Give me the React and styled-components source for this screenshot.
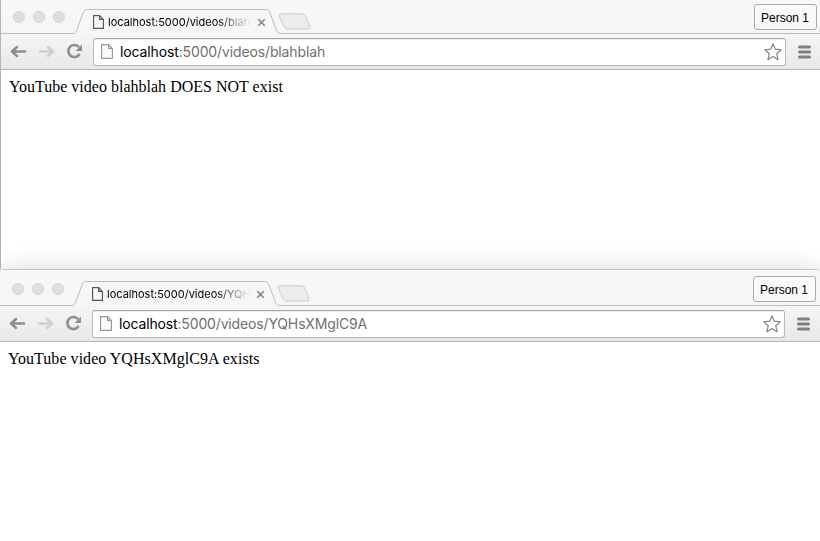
import React from "react";
import styled, { createGlobalStyle } from "styled-components";

const GlobalStyle = createGlobalStyle`
  * { box-sizing: border-box; }
  body { margin: 0; background: #fff; overflow: hidden; }
`;

const Desktop = styled.div`
  display: flex;
  flex-direction: column;
  width: 820px;
  height: 541px;
  overflow: hidden;
  background: #fff;
`;

const BrowserWindow = styled.section`
  display: flex;
  flex-direction: column;
  width: 820px;
  height: ${(p) => (p.$front ? 272 : 269)}px;
  flex: none;
  background: #fff;
  border-left: ${(p) => (p.$front ? "none" : "1px solid #b5b5b5")};
  border-top: ${(p) => (p.$front ? "1px solid #c3c3c3" : "none")};
  border-radius: ${(p) => (p.$front ? "4px 4px 0 0" : "0")};
  box-shadow: ${(p) => (p.$front ? "0 2px 26px rgba(0, 0, 0, 0.18)" : "none")};
  z-index: ${(p) => (p.$front ? 1 : 0)};
  overflow: hidden;
`;

const TabStrip = styled.header`
  display: flex;
  align-items: flex-end;
  flex: none;
  height: ${(p) => (p.$front ? 36 : 34)}px;
  padding-left: 12px;
  background: linear-gradient(#f8f8f8, #f5f5f5);
  box-shadow: inset 0 -1px #bdbdbd;
`;

const Lights = styled.div`
  display: flex;
  gap: 8px;
  width: 62px;
  height: 23px;
`;

const Light = styled.span`
  width: 12px;
  height: 12px;
  border-radius: 50%;
  background: #dfdfdf;
  border: 1px solid #d4d4d4;
`;

const Tab = styled.div`
  position: relative;
  display: flex;
  align-items: center;
  width: 207px;
  height: 25px;
  padding: 1px 0 0 17.5px;
`;

const TabShape = styled.svg`
  position: absolute;
  left: -2px;
  top: 0;
`;

const TabPage = styled.svg`
  position: relative;
  flex: none;
`;

const TabTitle = styled.span`
  position: relative;
  width: 145px;
  margin-left: 4.5px;
  overflow: hidden;
  white-space: nowrap;
  font: 11px/16px Inter, sans-serif;
  letter-spacing: 0;
  color: #000;
  -webkit-mask-image: linear-gradient(90deg, #000 108px, transparent 143px);
  mask-image: linear-gradient(90deg, #000 108px, transparent 143px);
`;

const CloseIcon = styled.svg`
  position: relative;
  flex: none;
  margin-left: 3.5px;
`;

const NewTab = styled.svg`
  flex: none;
  margin: 0 0 3px -4px;
`;

const ProfileButton = styled.button`
  width: 63px;
  height: 26px;
  margin: 0 ${(p) => (p.$front ? 4 : 3)}px 4px auto;
  padding: 2px 1px 0 0;
  border: 1px solid #aaa;
  border-radius: 3px;
  background: #f9f9f9;
  color: #000;
  font: 12px/16px "Liberation Sans", Arial, sans-serif;
  white-space: nowrap;
`;

const Toolbar = styled.nav`
  display: flex;
  align-items: center;
  flex: none;
  height: 36px;
  border-bottom: 1px solid #b6b6b6;
  background: linear-gradient(#f5f5f5, #e8e8e8);
`;

const NavIcons = styled.svg`
  flex: none;
`;

const AddressBar = styled.div`
  display: flex;
  align-items: center;
  width: 693px;
  height: 28px;
  padding: 0 3px 0 7px;
  border: 1px solid #b8b8b8;
  border-top-color: #a5a5a5;
  border-radius: 3px;
  background: #fff;
  box-shadow: inset 0 1px #ececec;
`;

const Url = styled.span`
  flex: 1;
  margin-left: 7px;
  font: 14px/20px Inter, sans-serif;
  letter-spacing: ${(p) => p.$spacing}px;
  color: #707070;
`;

const Host = styled.span`
  color: #000;
`;

const MenuIcon = styled.svg`
  flex: none;
  margin-left: 12px;
`;

const Page = styled.main`
  padding: 8px;
  font: 16px/18px "Liberation Serif", "Times New Roman", serif;
  letter-spacing: ${(p) => (p.$front ? "0.04px" : "0.01px")};
  color: #000;
`;

function PageGlyph({ as: Svg = "svg", color, width = 11, height = 14 }) {
  return (
    <Svg width={width} height={height} viewBox={`0 0 ${width} ${height}`} fill="none">
      <path
        d={`M.6 .6H${width - 4.4}L${width - 0.6} 4.4V${height - 0.6}H.6ZM${width - 4.4} .6V4.4H${width - 0.6}`}
        fill="#fafafa"
        stroke={color}
        strokeWidth="1.15"
      />
    </Svg>
  );
}

function Navigation() {
  return (
    <NavIcons width="92" height="35" viewBox="0 0 92 35" fill="none">
      <g strokeWidth="2.5" strokeLinecap="round" strokeLinejoin="round">
        <path d="M11 17.5H24M16 13L11 17.5L16 22" stroke="#8e8e8e" />
        <path d="M52 17.5H39M47 13L52 17.5L47 22" stroke="#cfcfcf" />
      </g>
      <path d="M78 13.2A6 6 0 1 0 78.6 20" stroke="#8e8e8e" strokeWidth="2.6" />
      <path d="M81 10.5V17H74.6Z" fill="#8e8e8e" />
    </NavIcons>
  );
}

function Browser({ front, path, urlSpacing, children }) {
  return (
    <BrowserWindow $front={front}>
      <TabStrip $front={front}>
        <Lights>
          <Light />
          <Light />
          <Light />
        </Lights>
        <Tab>
          <TabShape width="209" height="25" viewBox="-2 0 209 25">
            <path
              d="M-2 25V24.5C0 24.3 1 23 1.8 21L8 4C9 1.4 10 .5 12.5.5H190.5C193.2.5 194 1.6 195 4L201.3 21C202 23 203 24.3 206.5 24.5V25Z"
              fill="#f6f6f6"
            />
            <path
              d="M-2 24.5C0 24.3 1 23 1.8 21L8 4C9 1.4 10 .5 12.5.5H190.5C193.2.5 194 1.6 195 4L201.3 21C202 23 203 24.3 206.5 24.5"
              fill="none"
              stroke="#bdbdbd"
            />
          </TabShape>
          <PageGlyph as={TabPage} color="#555" />
          <TabTitle>localhost:5000/videos/{path}</TabTitle>
          <CloseIcon width="9" height="9" viewBox="0 0 9 9">
            <path d="M1.2 1.2L7.8 7.8M7.8 1.2L1.2 7.8" stroke="#858585" strokeWidth="1.6" />
          </CloseIcon>
        </Tab>
        <NewTab width="33" height="18" viewBox="0 0 33 18">
          <path
            d="M2.8 .8H24.5Q26.8.8 27.8 3L31.8 13.5Q32.5 16 30 16H9.5Q7 16 6 13.6L1.3 3Q.6.8 2.8.8Z"
            fill="#ececec"
            stroke="#cacaca"
          />
        </NewTab>
        <ProfileButton $front={front}>Person 1</ProfileButton>
      </TabStrip>
      <Toolbar>
        <Navigation />
        <AddressBar>
          <PageGlyph color="#999" width={12} height={15} />
          <Url $spacing={urlSpacing}>
            <Host>localhost</Host>:5000/videos/{path}
          </Url>
          <svg width="18" height="18" viewBox="0 0 18 18">
            <path
              d="M9 .9L11.3 6.2L17.2 6.8L12.8 10.8L14.1 16.8L9 13.6L3.9 16.8L5.2 10.8L.8 6.8L6.7 6.2Z"
              fill="#fff"
              stroke="#858585"
              strokeWidth="1.2"
              strokeLinejoin="round"
            />
          </svg>
        </AddressBar>
        <MenuIcon width="13" height="14" viewBox="0 0 13 14">
          <path d="M1.5 2H11.5M1.5 7H11.5M1.5 12H11.5" stroke="#808080" strokeWidth="3" strokeLinecap="round" />
        </MenuIcon>
      </Toolbar>
      <Page $front={front}>{children}</Page>
    </BrowserWindow>
  );
}

export default function App() {
  return (
    <Desktop>
      <GlobalStyle />
      <Browser path="blahblah" urlSpacing={-0.13}>
        YouTube video blahblah DOES NOT exist
      </Browser>
      <Browser front path="YQHsXMglC9A" urlSpacing={-0.15}>
        YouTube video YQHsXMglC9A exists
      </Browser>
    </Desktop>
  );
}
